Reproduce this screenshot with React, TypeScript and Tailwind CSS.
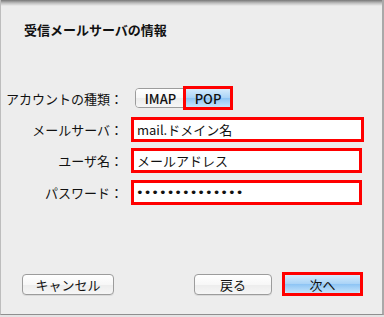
export default function App() {
  const btn =
    "h-[21px] rounded-[4px] border border-[#9c9c9c] bg-[linear-gradient(#ffffff,#f7f7f7_50%,#ececec_51%,#f6f6f6)] shadow-[0_1px_0_rgba(0,0,0,0.08)] flex items-center justify-center text-[13px] text-[#111] leading-none";
  return (
    <div className="w-[384px] h-[317px] bg-[#e4e4e4] overflow-hidden font-['Noto_Sans_CJK_JP','Noto_Sans',sans-serif]">
      <div className="h-[315px] w-[384px] bg-[#ededed] border-l border-l-[#bdbdbd] border-r-2 border-r-[#a9a9a9] border-b border-b-[#8f8f8f] flex flex-col">
        <div className="h-[6px] bg-[linear-gradient(#777777,#bdbdbd_50%,#ededed)]" />
        <div className="mt-[15px] pl-[23px] text-[13px] font-bold leading-[18px] text-[#111]">
          受信メールサーバの情報
        </div>

        <div className="mt-[49px] flex flex-col">
          <div className="flex items-center h-[20px]">
            <div className="w-[122px] text-right text-[13px] leading-none text-[#111]">アカウントの種類：</div>
            <div className="ml-[12px] flex h-[20px] rounded-[4px] border border-[#9c9c9c]">
              <div className="w-[50px] h-full rounded-l-[3px] bg-[linear-gradient(#ffffff,#f7f7f7_50%,#ececec_51%,#f6f6f6)] border-r border-r-[#9c9c9c] flex items-center justify-center text-[13px] font-medium leading-none text-[#111]">
                IMAP
              </div>
              <div className="w-[44px] h-full rounded-none bg-[linear-gradient(#d5ebfc,#a9d3f7_50%,#8dc4f4_51%,#c6e4fb)] flex items-center justify-center text-[13px] font-medium leading-none text-[#111] outline-[3px] outline-solid outline-[#ff0000] outline-offset-[0px]">
                POP
              </div>
            </div>
          </div>

          <div className="mt-[9px] flex items-center h-[25px]">
            <div className="w-[122px] text-right text-[13px] leading-none text-[#111]">メールサーバ：</div>
            <div className="ml-[8px] w-[233px] h-[25px] border-[3px] border-[#ff0000] bg-white flex items-center pl-[3px] text-[13px] leading-none text-[#111]">
              mail.ドメイン名
            </div>
          </div>

          <div className="mt-[6px] flex items-center h-[25px]">
            <div className="w-[122px] text-right text-[13px] leading-none text-[#111]">ユーザ名：</div>
            <div className="ml-[8px] w-[231px] h-[25px] border-[3px] border-[#ff0000] bg-white flex items-center pl-[3px] text-[13px] leading-none text-[#111]">
              メールアドレス
            </div>
          </div>

          <div className="mt-[7px] flex items-center h-[25px]">
            <div className="w-[122px] text-right text-[13px] leading-none text-[#111]">パスワード：</div>
            <div className="ml-[8px] w-[231px] h-[25px] border-[3px] border-[#ff0000] bg-white flex items-center pl-[2px] text-[13px] leading-none text-[#111] font-['DejaVu_Sans',sans-serif]">
              ••••••••••••••
            </div>
          </div>
        </div>

        <div className="mt-[67px] flex items-start pl-[21px]">
          <div className={btn + " w-[92px] mt-[2px]"}>キャンセル</div>
          <div className={btn + " w-[78px] ml-[80px] mt-[2px]"}>戻る</div>
          <div className="ml-[10px] w-[81px] h-[24px] border-[3px] border-[#ff0000] flex">
            <div className="flex-1 rounded-[3px] bg-[linear-gradient(#d5ebfc,#a9d3f7_50%,#8dc4f4_51%,#c6e4fb)] flex items-center justify-center text-[13px] leading-none text-[#111]">
              次へ
            </div>
          </div>
        </div>
      </div>
    </div>
  );
}
